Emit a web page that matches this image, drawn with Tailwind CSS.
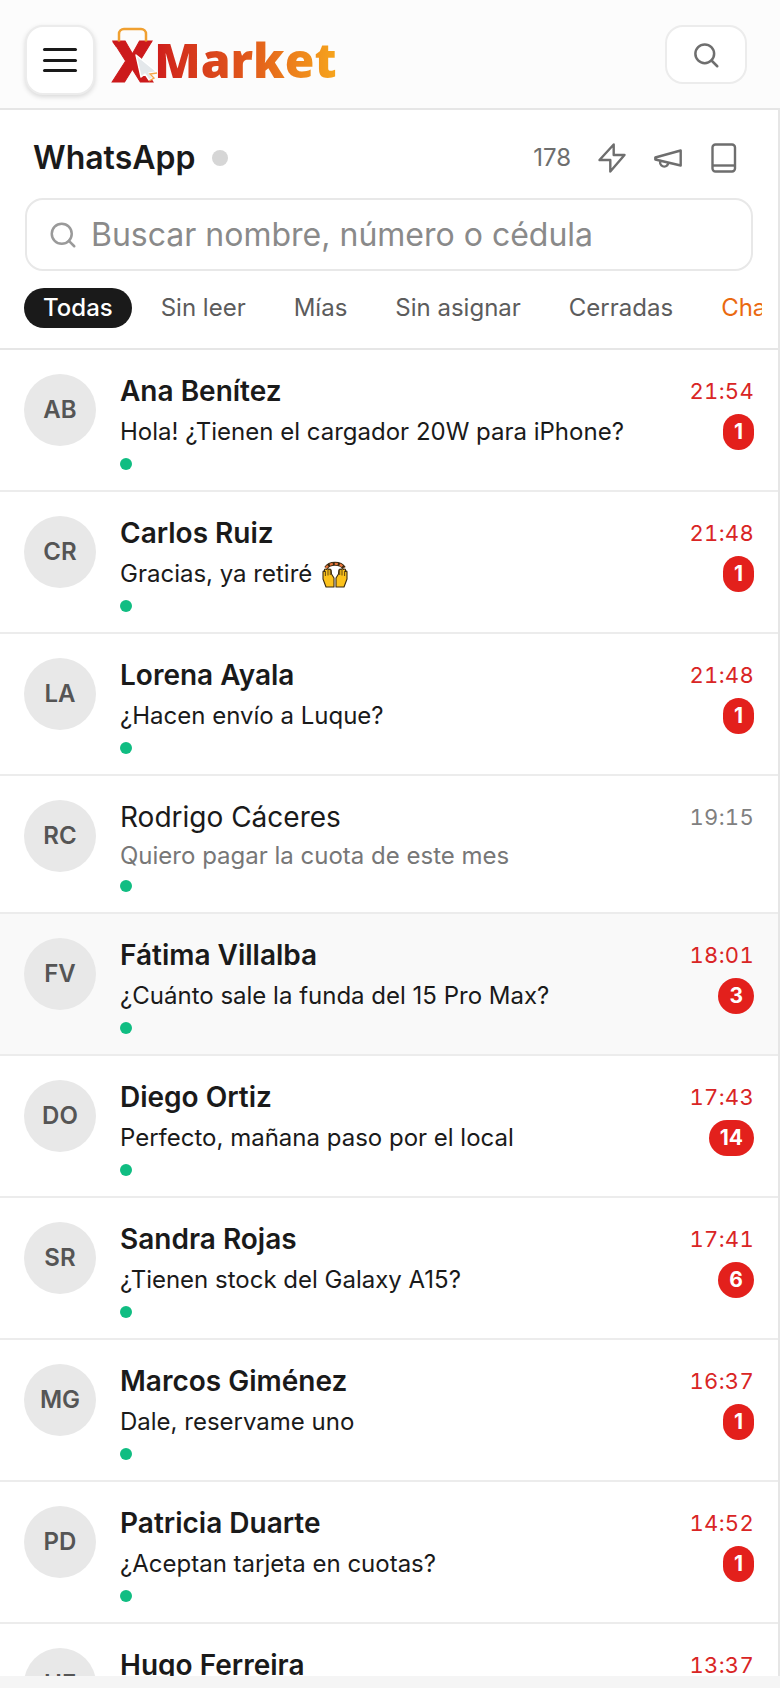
<!DOCTYPE html>
<html lang="es">
  <head>
    <meta charset="utf-8" />
    <meta content="width=device-width, initial-scale=1" name="viewport" />
    <title>WhatsApp - XMarket</title>
    <script src="https://cdn.jsdelivr.net/npm/@tailwindcss/browser@4"></script>
  </head>
  <body class="bg-[#f5f5f5] font-['Inter',sans-serif] text-[#1a1a1a]">
    <div class="flex h-[1688px] w-[780px] flex-col overflow-hidden">
      <!-- top bar -->
      <header class="flex h-[110px] shrink-0 items-start justify-between border-b-2 border-[#e6e6e6] bg-[#fcfcfc] pl-[25px] pr-[33px] pt-[25px]">
        <div class="flex items-start gap-[17px]">
          <button class="flex h-[70px] w-[70px] flex-col items-center justify-center gap-[7.5px] rounded-[18px] border-2 border-[#ececec] bg-white shadow-[0_2px_5px_rgba(0,0,0,0.14)]">
            <span class="h-[3px] w-[34px] rounded-full bg-[#1a1a1a]"></span>
            <span class="h-[3px] w-[34px] rounded-full bg-[#1a1a1a]"></span>
            <span class="h-[3px] w-[34px] rounded-full bg-[#1a1a1a]"></span>
          </button>
          <div class="relative h-[70px] w-[226px]">
            <div class="flex h-[58px] items-end font-['Open_Sans',sans-serif] font-extrabold leading-[46px]">
              <span class="text-[57px] leading-[46px] text-[#cc1a1c] [-webkit-text-stroke:1px_#cc1a1c]">X</span>
              <span class="ml-[1px] whitespace-nowrap bg-linear-to-r from-[#cf1b1c] via-[#e0561b] to-[#f6a41c] bg-clip-text text-[48px] leading-[46px] text-transparent">Market</span>
            </div>
            <svg class="absolute left-0 top-0" width="60" height="60" viewBox="0 0 60 60" fill="none">
              <path d="M7 18 V9 a5 5 0 0 1 5-5 H29 a5 5 0 0 1 5 5 V18" stroke="#f0a030" stroke-width="2.5" />
              <path d="M0 16.5 H13 L15 22 H4 Z M26 22 L28 16.5 H40 L36 22 Z" fill="#cc1a1c" />
              <path d="M24 30 L45 47 L37 48 L41 53 L37 55 L33 49 L29 52 Z" fill="#e4e8eb" stroke="#ffffff" stroke-width="1.4" stroke-linejoin="round" />
              <path d="M45 48 L38 49 L42 53 L37 56" stroke="#f5a64a" stroke-width="1.4" />
            </svg>
          </div>
        </div>
        <button class="flex h-[59px] w-[82px] items-center justify-center rounded-[18px] border-2 border-[#ececec] bg-white">
          <svg width="30" height="30" viewBox="0 0 24 24" fill="none" stroke="#6e6e6e" stroke-width="2" stroke-linecap="round" stroke-linejoin="round"><circle cx="11" cy="11" r="7.5" /><path d="m21 21-4.6-4.6" /></svg>
        </button>
      </header>

      <main class="flex min-h-0 flex-1 flex-col border-r-2 border-[#e6e6e6] bg-white">
        <!-- channel head -->
        <div class="shrink-0 border-b-2 border-[#e6e6e6] pb-[20px]">
          <div class="mt-[8px] flex h-[80px] items-center justify-between pl-[33px] pr-[41px]">
            <div class="flex items-center gap-[17px]">
              <h1 class="text-[32px] font-semibold leading-none">WhatsApp</h1>
              <span class="h-4 w-4 rounded-full bg-[#d6d6d6]"></span>
            </div>
            <div class="flex items-center">
              <span class="mr-[26px] text-[24px] leading-none text-[#6e6e6e]">178</span>
              <svg class="mr-[26px]" width="30" height="30" viewBox="0 0 30 30" fill="none" stroke="#6e6e6e" stroke-width="2.4" stroke-linejoin="round"><path d="M16.7 1.5 L2.5 17 H13.3 V28.5 L27.5 12 H16.7 Z" /></svg>
              <svg class="mr-[28px]" width="30" height="30" viewBox="0 0 30 30" fill="none" stroke="#6e6e6e" stroke-width="2.4" stroke-linejoin="round" stroke-linecap="round"><path d="M2.3 14.5 L27.7 7.5 V22.5 L2.3 16.5 Z" /><path d="M7.5 18 a4 4 0 0 0 7.5 3" /></svg>
              <svg width="26" height="30" viewBox="0 0 26 30" fill="none" stroke="#6e6e6e" stroke-width="2.4" stroke-linejoin="round"><rect x="1.5" y="1.5" width="22.5" height="27" rx="3" /><path d="M1.5 22.5 H24" /></svg>
            </div>
          </div>
          <label class="mx-[25px] flex h-[73px] items-center rounded-[18px] border-2 border-[#e8e8e8] bg-white pl-[21px]">
            <svg width="30" height="30" viewBox="0 0 24 24" fill="none" stroke="#9a9a9a" stroke-width="2" stroke-linecap="round"><circle cx="11" cy="11" r="8" /><path d="m21 21-4.3-4.3" /></svg>
            <span class="ml-[13px] text-[32px] leading-none text-[#8a8a8a]">Buscar nombre, número o cédula</span>
          </label>
          <nav class="ml-[24px] mr-[16px] mt-[17px] flex gap-[10px] overflow-hidden text-[24px] leading-[40px] text-[#5c5c5c]">
            <a class="shrink-0 rounded-full bg-[#1a1a1a] px-[19px] font-medium text-white">Todas</a>
            <a class="shrink-0 px-[19px]">Sin leer</a>
            <a class="shrink-0 px-[19px]">Mías</a>
            <a class="shrink-0 px-[19px]">Sin asignar</a>
            <a class="shrink-0 px-[19px]">Cerradas</a>
            <a class="shrink-0 px-[19px] text-[#ea6a10]">Chatbot</a>
          </nav>
        </div>

        <!-- chats -->
        <ul class="min-h-0 flex-1 overflow-hidden">
          <li class="flex gap-[24px] border-b-2 border-[#ececec] pl-[24px] pr-[24px] pt-[24px] pb-[20px]">
            <div class="flex h-[72px] w-[72px] shrink-0 items-center justify-center rounded-full bg-[#e8e8e8] text-[24px] font-semibold text-[#555]">AB</div>
            <div class="min-w-0 flex-1">
              <div class="flex h-[34px] items-center justify-between"><span class="text-[28px] font-semibold">Ana Benítez</span><time class="text-[22px] tabular-nums tracking-[0.3px] text-[#d92525]">21:54</time></div>
              <div class="mt-[6px] flex items-center justify-between"><p class="text-[24px] leading-[32px]">Hola! ¿Tienen el cargador 20W para iPhone?</p><span class="flex h-[36px] items-center rounded-full bg-[#e3201c] px-[11px] text-[21px] font-bold text-white">1</span></div>
              <div class="mt-[8px] h-[12px] w-[12px] rounded-full bg-[#10bd82]"></div>
            </div>
          </li>
          <li class="flex gap-[24px] border-b-2 border-[#ececec] pl-[24px] pr-[24px] pt-[24px] pb-[20px]">
            <div class="flex h-[72px] w-[72px] shrink-0 items-center justify-center rounded-full bg-[#e8e8e8] text-[24px] font-semibold text-[#555]">CR</div>
            <div class="min-w-0 flex-1">
              <div class="flex h-[34px] items-center justify-between"><span class="text-[28px] font-semibold">Carlos Ruiz</span><time class="text-[22px] tabular-nums tracking-[0.3px] text-[#d92525]">21:48</time></div>
              <div class="mt-[6px] flex items-center justify-between">
                <p class="flex items-center gap-[8px] text-[24px] leading-[32px]">Gracias, ya retiré
                  <svg width="30" height="30" viewBox="0 0 30 30" stroke="#3a2a10" stroke-width="1.1" stroke-linejoin="round">
                    <path d="M6 9 a10 7.5 0 0 1 18 0" fill="none" stroke="#3a2a10" stroke-width="4" />
                    <path d="M6 9 a10 7.5 0 0 1 18 0" fill="none" stroke="#e8743a" stroke-width="2.2" stroke-dasharray="3 2" />
                    <path d="M6 28 L3 20 V13 Q3 11.5 4.5 12.5 V10.5 Q5 9.5 6.5 10.5 Q7.5 9 9 10.5 Q10.5 9.5 11.2 11.5 L11.5 15 L14 19 V28 Z" fill="#fcc21b" />
                    <path d="M5.4 12 V17 M8 10.5 V16.5 M10.3 11 V16" fill="none" stroke-width="0.8" />
                    <path d="M24 28 L27 20 V13 Q27 11.5 25.5 12.5 V10.5 Q25 9.5 23.5 10.5 Q22.5 9 21 10.5 Q19.5 9.5 18.8 11.5 L18.5 15 L16 19 V28 Z" fill="#fcc21b" />
                    <path d="M24.6 12 V17 M22 10.5 V16.5 M19.7 11 V16" fill="none" stroke-width="0.8" />
                  </svg>
                </p>
                <span class="flex h-[36px] items-center rounded-full bg-[#e3201c] px-[11px] text-[21px] font-bold text-white">1</span>
              </div>
              <div class="mt-[8px] h-[12px] w-[12px] rounded-full bg-[#10bd82]"></div>
            </div>
          </li>
          <li class="flex gap-[24px] border-b-2 border-[#ececec] pl-[24px] pr-[24px] pt-[24px] pb-[20px]">
            <div class="flex h-[72px] w-[72px] shrink-0 items-center justify-center rounded-full bg-[#e8e8e8] text-[24px] font-semibold text-[#555]">LA</div>
            <div class="min-w-0 flex-1">
              <div class="flex h-[34px] items-center justify-between"><span class="text-[28px] font-semibold">Lorena Ayala</span><time class="text-[22px] tabular-nums tracking-[0.3px] text-[#d92525]">21:48</time></div>
              <div class="mt-[6px] flex items-center justify-between"><p class="text-[24px] leading-[32px]">¿Hacen envío a Luque?</p><span class="flex h-[36px] items-center rounded-full bg-[#e3201c] px-[11px] text-[21px] font-bold text-white">1</span></div>
              <div class="mt-[8px] h-[12px] w-[12px] rounded-full bg-[#10bd82]"></div>
            </div>
          </li>
          <li class="flex gap-[24px] border-b-2 border-[#ececec] pl-[24px] pr-[24px] pt-[24px] pb-[20px]">
            <div class="flex h-[72px] w-[72px] shrink-0 items-center justify-center rounded-full bg-[#e8e8e8] text-[24px] font-semibold text-[#555]">RC</div>
            <div class="min-w-0 flex-1">
              <div class="flex h-[34px] items-center justify-between"><span class="text-[28px] font-normal">Rodrigo Cáceres</span><time class="text-[22px] tabular-nums tracking-[0.3px] text-[#808080]">19:15</time></div>
              <div class="mt-[6px] flex items-center justify-between"><p class="text-[24px] leading-[32px] text-[#777]">Quiero pagar la cuota de este mes</p></div>
              <div class="mt-[8px] h-[12px] w-[12px] rounded-full bg-[#10bd82]"></div>
            </div>
          </li>
          <li class="flex gap-[24px] border-b-2 border-[#ececec] bg-[#f9f9f9] pl-[24px] pr-[24px] pt-[24px] pb-[20px]">
            <div class="flex h-[72px] w-[72px] shrink-0 items-center justify-center rounded-full bg-[#e8e8e8] text-[24px] font-semibold text-[#555]">FV</div>
            <div class="min-w-0 flex-1">
              <div class="flex h-[34px] items-center justify-between"><span class="text-[28px] font-semibold">Fátima Villalba</span><time class="text-[22px] tabular-nums tracking-[0.3px] text-[#d92525]">18:01</time></div>
              <div class="mt-[6px] flex items-center justify-between"><p class="text-[24px] leading-[32px]">¿Cuánto sale la funda del 15 Pro Max?</p><span class="flex h-[36px] items-center rounded-full bg-[#e3201c] px-[11px] text-[21px] font-bold text-white">3</span></div>
              <div class="mt-[8px] h-[12px] w-[12px] rounded-full bg-[#10bd82]"></div>
            </div>
          </li>
          <li class="flex gap-[24px] border-b-2 border-[#ececec] pl-[24px] pr-[24px] pt-[24px] pb-[20px]">
            <div class="flex h-[72px] w-[72px] shrink-0 items-center justify-center rounded-full bg-[#e8e8e8] text-[24px] font-semibold text-[#555]">DO</div>
            <div class="min-w-0 flex-1">
              <div class="flex h-[34px] items-center justify-between"><span class="text-[28px] font-semibold">Diego Ortiz</span><time class="text-[22px] tabular-nums tracking-[0.3px] text-[#d92525]">17:43</time></div>
              <div class="mt-[6px] flex items-center justify-between"><p class="text-[24px] leading-[32px]">Perfecto, mañana paso por el local</p><span class="flex h-[36px] items-center rounded-full bg-[#e3201c] px-[11px] text-[21px] font-bold text-white">14</span></div>
              <div class="mt-[8px] h-[12px] w-[12px] rounded-full bg-[#10bd82]"></div>
            </div>
          </li>
          <li class="flex gap-[24px] border-b-2 border-[#ececec] pl-[24px] pr-[24px] pt-[24px] pb-[20px]">
            <div class="flex h-[72px] w-[72px] shrink-0 items-center justify-center rounded-full bg-[#e8e8e8] text-[24px] font-semibold text-[#555]">SR</div>
            <div class="min-w-0 flex-1">
              <div class="flex h-[34px] items-center justify-between"><span class="text-[28px] font-semibold">Sandra Rojas</span><time class="text-[22px] tabular-nums tracking-[0.3px] text-[#d92525]">17:41</time></div>
              <div class="mt-[6px] flex items-center justify-between"><p class="text-[24px] leading-[32px]">¿Tienen stock del Galaxy A15?</p><span class="flex h-[36px] items-center rounded-full bg-[#e3201c] px-[11px] text-[21px] font-bold text-white">6</span></div>
              <div class="mt-[8px] h-[12px] w-[12px] rounded-full bg-[#10bd82]"></div>
            </div>
          </li>
          <li class="flex gap-[24px] border-b-2 border-[#ececec] pl-[24px] pr-[24px] pt-[24px] pb-[20px]">
            <div class="flex h-[72px] w-[72px] shrink-0 items-center justify-center rounded-full bg-[#e8e8e8] text-[24px] font-semibold text-[#555]">MG</div>
            <div class="min-w-0 flex-1">
              <div class="flex h-[34px] items-center justify-between"><span class="text-[28px] font-semibold">Marcos Giménez</span><time class="text-[22px] tabular-nums tracking-[0.3px] text-[#d92525]">16:37</time></div>
              <div class="mt-[6px] flex items-center justify-between"><p class="text-[24px] leading-[32px]">Dale, reservame uno</p><span class="flex h-[36px] items-center rounded-full bg-[#e3201c] px-[11px] text-[21px] font-bold text-white">1</span></div>
              <div class="mt-[8px] h-[12px] w-[12px] rounded-full bg-[#10bd82]"></div>
            </div>
          </li>
          <li class="flex gap-[24px] border-b-2 border-[#ececec] pl-[24px] pr-[24px] pt-[24px] pb-[20px]">
            <div class="flex h-[72px] w-[72px] shrink-0 items-center justify-center rounded-full bg-[#e8e8e8] text-[24px] font-semibold text-[#555]">PD</div>
            <div class="min-w-0 flex-1">
              <div class="flex h-[34px] items-center justify-between"><span class="text-[28px] font-semibold">Patricia Duarte</span><time class="text-[22px] tabular-nums tracking-[0.3px] text-[#d92525]">14:52</time></div>
              <div class="mt-[6px] flex items-center justify-between"><p class="text-[24px] leading-[32px]">¿Aceptan tarjeta en cuotas?</p><span class="flex h-[36px] items-center rounded-full bg-[#e3201c] px-[11px] text-[21px] font-bold text-white">1</span></div>
              <div class="mt-[8px] h-[12px] w-[12px] rounded-full bg-[#10bd82]"></div>
            </div>
          </li>
          <li class="flex gap-[24px] border-b-2 border-[#ececec] pl-[24px] pr-[24px] pt-[24px] pb-[20px]">
            <div class="flex h-[72px] w-[72px] shrink-0 items-center justify-center rounded-full bg-[#e8e8e8] text-[24px] font-semibold text-[#555]">HF</div>
            <div class="min-w-0 flex-1">
              <div class="flex h-[34px] items-center justify-between"><span class="text-[28px] font-semibold">Hugo Ferreira</span><time class="text-[22px] tabular-nums tracking-[0.3px] text-[#d92525]">13:37</time></div>
            </div>
          </li>
        </ul>
      </main>
      <div class="h-[12px] shrink-0 bg-[#f5f5f5]"></div>
    </div>
  </body>
</html>
